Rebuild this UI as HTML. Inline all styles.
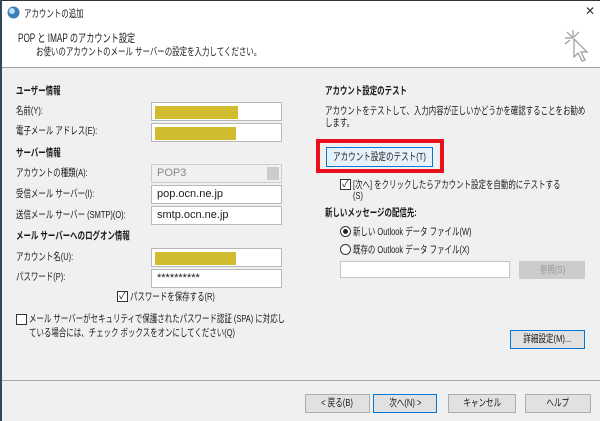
<!DOCTYPE html>
<html><head><meta charset="utf-8"><style>
*{margin:0;padding:0;box-sizing:border-box}
body{width:600px;height:421px;position:relative;overflow:hidden;background:#f0f0f0;font-family:"Liberation Sans","Noto Sans CJK JP",sans-serif;font-size:10.5px;color:#1a1a1a}
.a{position:absolute;white-space:nowrap}
.t{transform:scaleX(0.71);transform-origin:0 0}
.b{font-weight:bold}
.in{position:absolute;background:#fff;border:1px solid #b8b8b8;height:19px;padding:2px 0 0 5px;font-size:11px}
.y{position:absolute;left:3px;top:3px;height:13px;background:#d1bb2e}
.btn{position:absolute;background:#e1e1e1;border:1px solid #adadad;height:19px;text-align:center;line-height:17px;font-size:10.5px;white-space:nowrap;overflow:hidden}
.btn span{display:inline-block;transform:scaleX(0.72);margin:0 -20px}
.cb{position:absolute;width:11px;height:11px;border:1px solid #333;background:#fff;font-size:10px;line-height:9px;text-align:center}
.rd{position:absolute;width:11px;height:11px;border:1px solid #333;border-radius:50%;background:#fff}
</style></head><body>
<div class="a" style="left:0;top:0;width:600px;height:68px;background:#fff;border-bottom:1px solid #a0a0a0"></div>
<div class="a" style="left:0;top:0;width:600px;height:1px;background:#333"></div>
<div class="a" style="left:0;top:0;width:2px;height:421px;background:#2b4a5a"></div>
<svg class="a" style="left:7px;top:6px" width="13" height="13"><circle cx="6.5" cy="6.5" r="6" fill="#3a7fb8"/><circle cx="5" cy="5" r="3" fill="#bfe0f0"/></svg>
<div class="a t" style="left:24px;top:6px">アカウントの追加</div>
<div class="a" style="left:585px;top:4px;font-size:12px;color:#333">✕</div>
<svg class="a" style="left:563px;top:28px" width="30" height="38"><g stroke="#999" stroke-width="1.2" fill="none"><path d="M10 2v8M2 10h8M4 4l5 5M16 4l-5 5M2 16l5-4"/><path d="M11 11l0 18 4-4 4 8 3-1-4-8 6 0z" fill="#fff"/></g></svg>
<div class="a t" style="left:18px;top:30px;font-size:11.5px">POP と IMAP のアカウント設定</div>
<div class="a t" style="left:36px;top:44px">お使いのアカウントのメール サーバーの設定を入力してください。</div>

<div class="a t b" style="left:16px;top:83px">ユーザー情報</div>
<div class="a t" style="left:16px;top:103px">名前(Y):</div>
<div class="in" style="left:151px;top:102px;width:131px"><div class="y" style="width:83px"></div></div>
<div class="a t" style="left:16px;top:123px">電子メール アドレス(E):</div>
<div class="in" style="left:151px;top:123px;width:131px"><div class="y" style="width:81px"></div></div>
<div class="a t b" style="left:16px;top:145px">サーバー情報</div>
<div class="a t" style="left:16px;top:165px">アカウントの種類(A):</div>
<div class="in" style="left:151px;top:164px;width:131px;background:#f0f0f0;color:#888;border-color:#ccc">POP3<div style="position:absolute;right:2px;top:2px;width:12px;height:13px;background:#ccc"></div></div>
<div class="a t" style="left:16px;top:186px">受信メール サーバー(I):</div>
<div class="in" style="left:151px;top:185px;width:131px">pop.ocn.ne.jp</div>
<div class="a t" style="left:16px;top:207px">送信メール サーバー (SMTP)(O):</div>
<div class="in" style="left:151px;top:206px;width:131px">smtp.ocn.ne.jp</div>
<div class="a t b" style="left:16px;top:228px">メール サーバーへのログオン情報</div>
<div class="a t" style="left:16px;top:249px">アカウント名(U):</div>
<div class="in" style="left:151px;top:248px;width:131px"><div class="y" style="width:81px"></div></div>
<div class="a t" style="left:16px;top:269px">パスワード(P):</div>
<div class="in" style="left:151px;top:269px;width:131px">**********</div>
<div class="cb" style="left:117px;top:291px">✓</div>
<div class="a t" style="left:130px;top:289px">パスワードを保存する(R)</div>
<div class="cb" style="left:16px;top:314px"></div>
<div class="a t" style="left:29px;top:311px">メール サーバーがセキュリティで保護されたパスワード認証 (SPA) に対応し</div>
<div class="a t" style="left:29px;top:325px">ている場合には、チェック ボックスをオンにしてください(Q)</div>

<div class="a t b" style="left:325px;top:83px">アカウント設定のテスト</div>
<div class="a t" style="left:325px;top:103px">アカウントをテストして、入力内容が正しいかどうかを確認することをお勧め</div>
<div class="a t" style="left:325px;top:115px">します。</div>
<div class="a" style="left:316px;top:139px;width:128px;height:34px;border:4px solid #e8101a"></div>
<div class="btn" style="left:326px;top:147px;width:107px;height:20px;background:#e5f1fb;border-color:#0078d7;line-height:18px"><span>アカウント設定のテスト(T)</span></div>
<div class="cb" style="left:340px;top:179px">✓</div>
<div class="a t" style="left:353px;top:177px">[次へ] をクリックしたらアカウント設定を自動的にテストする</div>
<div class="a t" style="left:353px;top:190px">(S)</div>
<div class="a t b" style="left:325px;top:205px">新しいメッセージの配信先:</div>
<div class="rd" style="left:340px;top:226px"><div style="position:absolute;left:2px;top:2px;width:5px;height:5px;border-radius:50%;background:#222"></div></div>
<div class="a t" style="left:353px;top:224px">新しい Outlook データ ファイル(W)</div>
<div class="rd" style="left:340px;top:244px"></div>
<div class="a t" style="left:353px;top:242px">既存の Outlook データ ファイル(X)</div>
<div class="in" style="left:340px;top:261px;width:170px;height:17px;border-color:#c4c4c4"></div>
<div class="btn" style="left:519px;top:261px;width:66px;height:18px;color:#999;background:#ccc;border-color:#ccc"><span>参照(S)</span></div>
<div class="btn" style="left:510px;top:330px;width:75px;border-color:#0078d7"><span>詳細設定(M)...</span></div>

<div class="a" style="left:2px;top:380px;width:598px;height:1px;background:#a8a8a8"></div>
<div class="btn" style="left:305px;top:394px;width:65px"><span>&lt; 戻る(B)</span></div>
<div class="btn" style="left:373px;top:394px;width:64px;border-color:#0078d7"><span>次へ(N) &gt;</span></div>
<div class="btn" style="left:448px;top:394px;width:68px"><span>キャンセル</span></div>
<div class="btn" style="left:525px;top:394px;width:66px"><span>ヘルプ</span></div>
</body></html>
